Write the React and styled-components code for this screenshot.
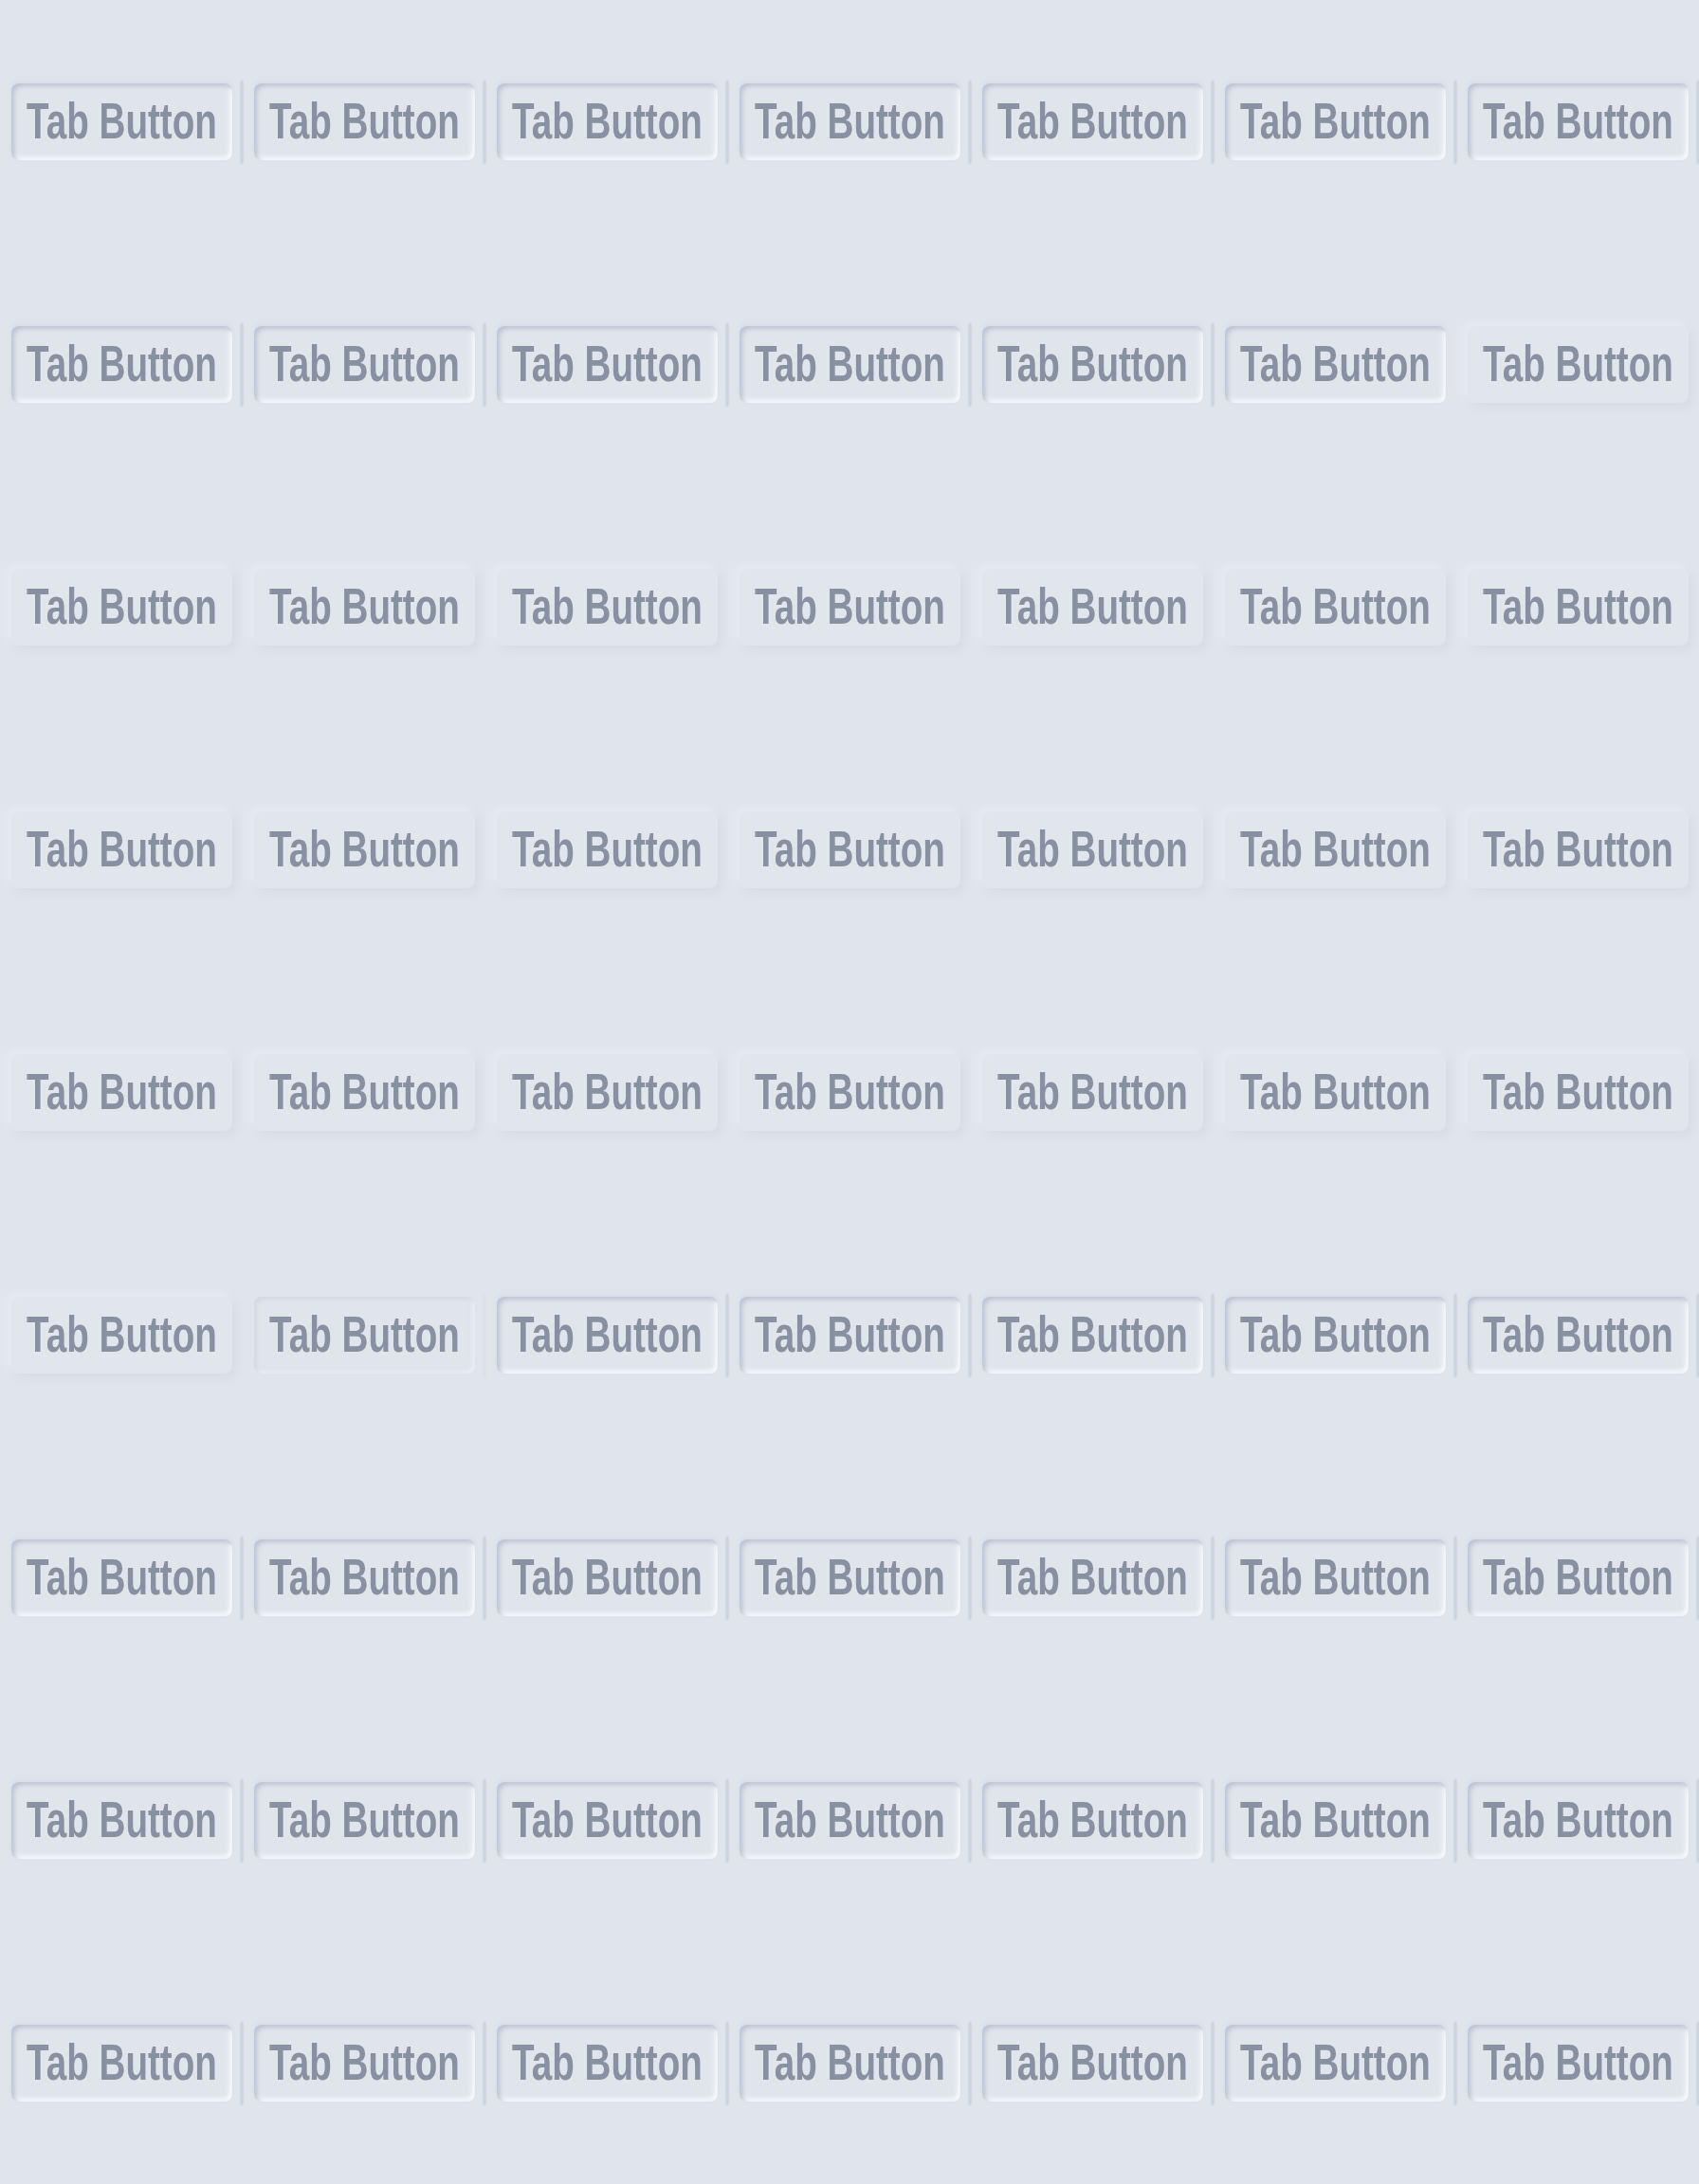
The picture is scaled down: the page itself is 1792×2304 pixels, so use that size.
import React from 'react';
import styled, { createGlobalStyle, css } from 'styled-components';

const GlobalStyle = createGlobalStyle`
  html, body {
    margin: 0;
    padding: 0;
    background: #e0e5ec;
  }
`;

const StyledGrid = styled.div`
  display: grid;
  grid-template-columns: repeat(7, 256px);
  grid-auto-rows: 256px;
  width: 1792px;
  background: #e0e5ec;
`;

const StyledCell = styled.div`
  position: relative;
  display: flex;
  align-items: center;
  justify-content: center;

  &::after {
    content: '';
    position: absolute;
    right: 0;
    top: 85px;
    width: 2px;
    height: 88px;
    border-radius: 2px;
    background: #b6c1d1;
    filter: blur(1.2px);
    opacity: ${({ separator }) => separator};
  }
`;

const pressed = css`
  background: #e0e5ec;
  box-shadow: inset 3px 3px 5px #b9c4d4, inset -3px -3px 5px #f9fafd,
    0 -2px 4px rgba(190, 200, 215, 0.3);
`;

const half = css`
  background: #e0e5ec;
  box-shadow: inset 2px 2px 4px rgba(183, 194, 210, 0.4),
    inset -2px -2px 4px rgba(251, 252, 254, 0.5);
`;

const flat = css`
  background: #e1e6ed;
  box-shadow: 4px 5px 8px rgba(170, 182, 200, 0.18),
    -4px -4px 8px rgba(255, 255, 255, 0.3);
`;

const StyledTabButton = styled.button`
  width: 233px;
  height: 81px;
  border: 0;
  border-radius: 8px;
  padding: 0;
  display: flex;
  align-items: center;
  justify-content: center;
  color: #8791a1;
  font-family: 'Liberation Sans', Arial, sans-serif;
  font-weight: 700;
  font-size: 54px;
  cursor: pointer;
  ${({ state }) => (state === 'pressed' ? pressed : state === 'half' ? half : flat)}
`;

const StyledLabel = styled.span`
  display: inline-block;
  white-space: nowrap;
  transform: scaleX(0.715);
  line-height: 1;
  margin-top: -2px;
`;

// p = pressed with separator, P = pressed, h = half pressed, f = flat
const rows = [
  'ppppppp',
  'pppppPf',
  'fffffff',
  'fffffff',
  'fffffff',
  'fhppppp',
  'ppppppp',
  'ppppppp',
  'ppppppp',
];

const stateOf = code => {
  if (code === 'p' || code === 'P') return 'pressed';
  if (code === 'h') return 'half';
  return 'flat';
};

const separatorOf = code => {
  if (code === 'p') return 0.9;
  if (code === 'h') return 0.2;
  return 0;
};

const App = () => (
  <>
    <GlobalStyle />
    <StyledGrid>
      {rows.map((row, r) =>
        row.split('').map((code, c) => (
          <StyledCell key={`${r}-${c}`} separator={separatorOf(code)}>
            <StyledTabButton state={stateOf(code)}>
              <StyledLabel>Tab Button</StyledLabel>
            </StyledTabButton>
          </StyledCell>
        )),
      )}
    </StyledGrid>
  </>
);

export default App;
